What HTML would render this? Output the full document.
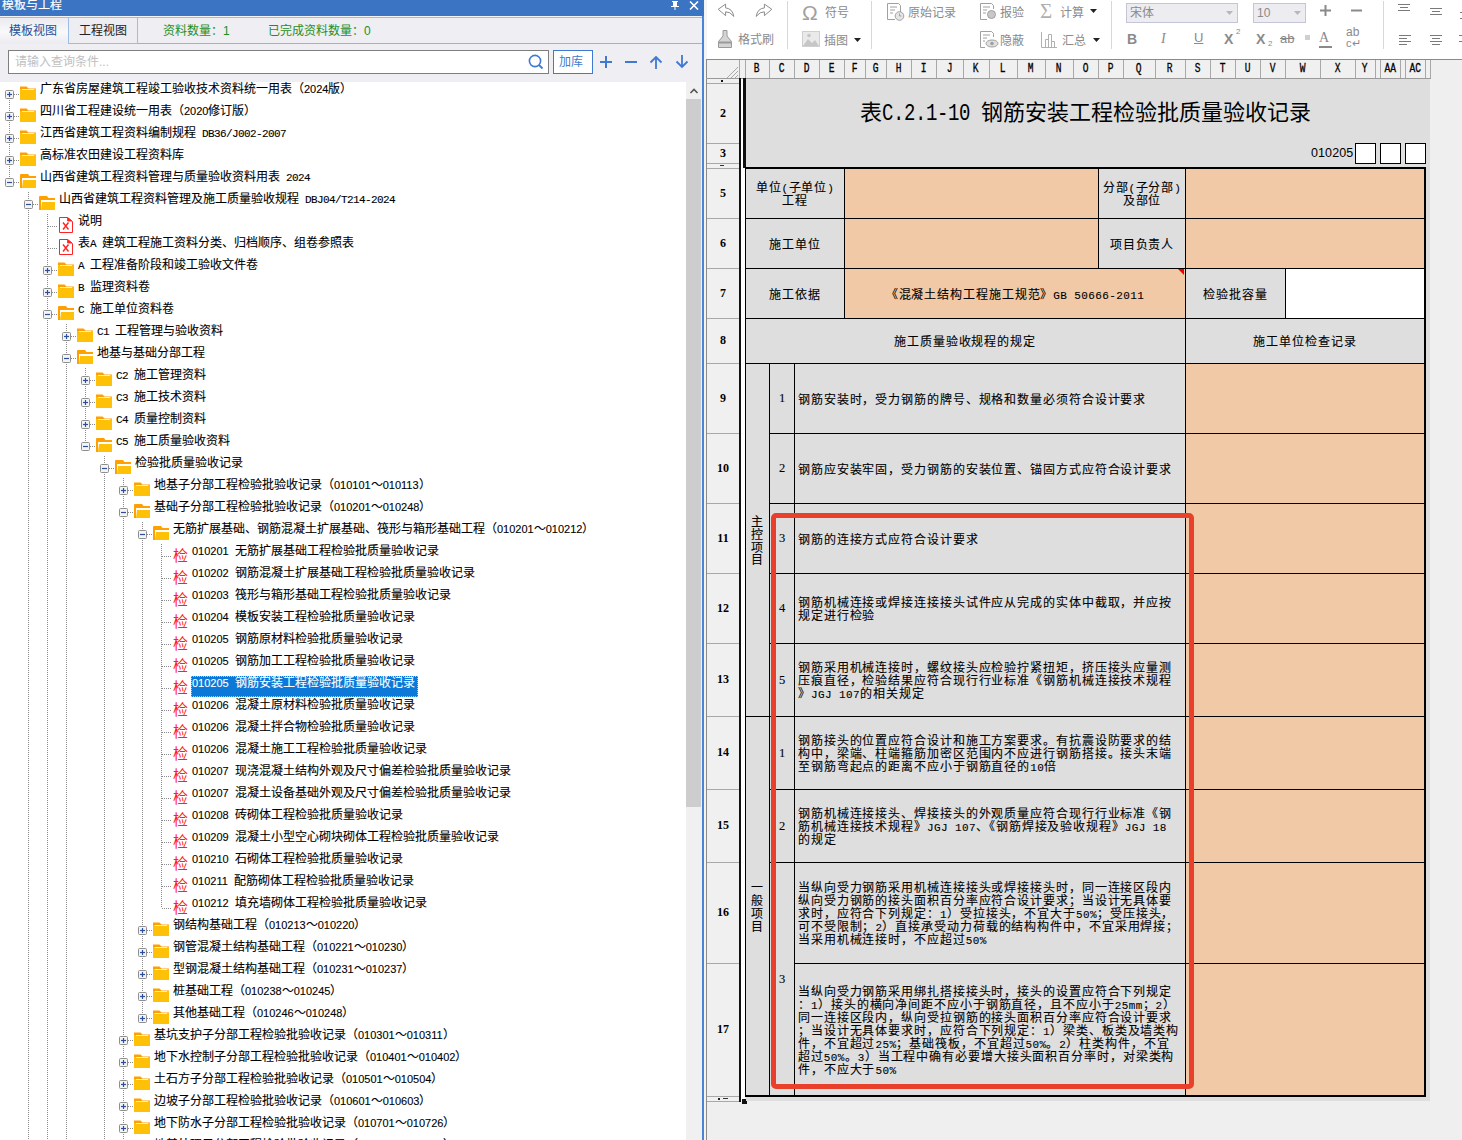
<!DOCTYPE html><html lang="zh-CN"><head><meta charset="utf-8"><style>
html,body{margin:0;padding:0}
body{width:1462px;height:1140px;overflow:hidden;position:relative;background:#fff;font-family:"Liberation Sans",sans-serif;font-size:12px;color:#000}
.tr,.sh{-webkit-text-stroke:0.1px}
div{position:absolute;box-sizing:border-box;white-space:pre}
span{white-space:pre}
svg{display:block}
.a{font-family:"Liberation Mono",monospace;font-size:11px;letter-spacing:-0.6px;line-height:1px}
.tr{font-size:12px;line-height:14px;height:14px}
.tr .a{font-family:"Liberation Sans",sans-serif;font-size:11px;letter-spacing:0;word-spacing:3px}
.tr.mo .a{font-family:"Liberation Mono",monospace;font-size:11px;letter-spacing:-0.6px;word-spacing:0}
.sh{font-size:12px;letter-spacing:0.9px;line-height:12.9px}
.sh .a{font-size:11px;letter-spacing:0.4px}
.rh{font-family:"Liberation Serif",serif;font-weight:bold;font-size:12px;width:32px;text-align:center;line-height:12px}
.ch{font-family:"Liberation Mono",monospace;font-size:12px;-webkit-text-stroke:0.3px;text-align:center;line-height:12px;top:63px}
.tb{color:#8a8a8a;font-size:12px;line-height:14px}
</style></head><body>

<div style="left:0px;top:0px;width:704px;height:16px;background:#3b74c3"></div>
<div style="left:2px;top:-2px;color:#fff;font-size:12px;line-height:14px;-webkit-text-stroke:0.15px">模板与工程</div>
<div style="left:671px;top:1px;width:8px;height:9px"><svg width="8" height="9"><rect x="1" y="0" width="6" height="1" fill="#fff"/><rect x="2" y="1" width="4" height="4" fill="#fff"/><rect x="0" y="5" width="8" height="1" fill="#fff"/><rect x="3.5" y="6" width="1" height="3" fill="#fff"/></svg></div>
<div style="left:689px;top:1px;width:10px;height:9px"><svg width="10" height="9"><path d="M1 0.5L9 8.5M9 0.5L1 8.5" stroke="#fff" stroke-width="1.6"/></svg></div>
<div style="left:0px;top:16px;width:702px;height:66px;background:#eeeef3"></div>
<div style="left:0px;top:16px;width:702px;height:1px;background:#f3f3f6"></div>
<div style="left:0px;top:17px;width:702px;height:1px;background:#9dbde8"></div>
<div style="left:68px;top:43px;width:634px;height:1px;background:#8fb3e3"></div>
<div style="left:0px;top:18px;width:68px;height:26px;background:linear-gradient(#ebebf0,#f9f9fb 55%,#ebebf0)"></div>
<div style="left:68px;top:17px;width:70px;height:27px;border:1px solid #9dbde8;background:#ededf2"></div>
<div style="left:9px;top:24px;color:#1f4f96;font-size:12px;line-height:14px">模板视图</div>
<div style="left:79px;top:24px;color:#222;font-size:12px;line-height:14px">工程视图</div>
<div style="left:163px;top:24px;color:#1f8f1f;font-size:12px;line-height:14px">资料数量：1</div>
<div style="left:268px;top:24px;color:#1f8f1f;font-size:12px;line-height:14px">已完成资料数量：0</div>
<div style="left:8px;top:50px;width:541px;height:24px;background:#fff;border:1px solid #7e7e7e"></div>
<div style="left:15px;top:55px;color:#c0c0c0;font-size:12px;line-height:14px">请输入查询条件...</div>
<div style="left:528px;top:54px;width:16px;height:16px"><svg width="16" height="16"><circle cx="7" cy="7" r="5.6" fill="none" stroke="#3d7bd0" stroke-width="1.6"/><path d="M11 11L14.5 14.5" stroke="#3d7bd0" stroke-width="1.8"/></svg></div>
<div style="left:553px;top:50px;width:40px;height:24px;border:1px solid #3f7ad0;background:#fff"></div>
<div style="left:559px;top:55px;color:#3f7ad0;font-size:12px;line-height:14px">加库</div>
<div style="left:598px;top:54px;width:92px;height:16px"><svg width="92" height="16"><path d="M2 8H14M8 2V14" stroke="#3f7ad0" stroke-width="2"/><path d="M27 8H39" stroke="#3f7ad0" stroke-width="2"/><path d="M58 3V15M52.5 8.5L58 3L63.5 8.5" stroke="#3f7ad0" stroke-width="1.8" fill="none"/><path d="M84 1V13M78.5 7.5L84 13L89.5 7.5" stroke="#3f7ad0" stroke-width="1.8" fill="none"/></svg></div>
<div style="left:0px;top:82px;width:686px;height:1058px;background:#fff"></div>
<div style="left:686px;top:82px;width:16px;height:1058px;background:#f0f0f0"></div>
<div style="left:686px;top:99px;width:15px;height:708px;background:#cdcdcd"></div>
<div style="left:689px;top:87px;width:10px;height:8px"><svg width="10" height="8"><path d="M1.5 6L5 2.5L8.5 6" stroke="#555" stroke-width="1.6" fill="none"/></svg></div>
<div style="left:702px;top:16px;width:2px;height:1124px;background:#4a84d6"></div>
<div style="left:704px;top:0px;width:3px;height:1140px;background:#f4f4f6"></div>
<div style="left:9px;top:94px;width:1px;height:88px;background-image:linear-gradient(#8a8a8a 50%,transparent 50%);background-size:1px 2px"></div>
<div style="left:28px;top:192px;width:1px;height:948px;background-image:linear-gradient(#8a8a8a 50%,transparent 50%);background-size:1px 2px"></div>
<div style="left:47px;top:214px;width:1px;height:926px;background-image:linear-gradient(#8a8a8a 50%,transparent 50%);background-size:1px 2px"></div>
<div style="left:66px;top:324px;width:1px;height:816px;background-image:linear-gradient(#8a8a8a 50%,transparent 50%);background-size:1px 2px"></div>
<div style="left:85px;top:368px;width:1px;height:78px;background-image:linear-gradient(#8a8a8a 50%,transparent 50%);background-size:1px 2px"></div>
<div style="left:104px;top:456px;width:1px;height:684px;background-image:linear-gradient(#8a8a8a 50%,transparent 50%);background-size:1px 2px"></div>
<div style="left:123px;top:478px;width:1px;height:662px;background-image:linear-gradient(#8a8a8a 50%,transparent 50%);background-size:1px 2px"></div>
<div style="left:142px;top:522px;width:1px;height:496px;background-image:linear-gradient(#8a8a8a 50%,transparent 50%);background-size:1px 2px"></div>
<div style="left:161px;top:544px;width:1px;height:364px;background-image:linear-gradient(#8a8a8a 50%,transparent 50%);background-size:1px 2px"></div>
<div style="left:14px;top:94px;width:6px;height:1px;background-image:linear-gradient(90deg,#8a8a8a 50%,transparent 50%);background-size:2px 1px"></div>
<div style="left:5px;top:90px;width:9px;height:9px"><svg width="9" height="9"><rect x="0.5" y="0.5" width="8" height="8" rx="1" fill="#f4f4f4" stroke="#8e8e8e"/><path d="M2 4.5H7" stroke="#2b4f9e" stroke-width="1.2"/><path d="M4.5 2V7" stroke="#2b4f9e" stroke-width="1.2"/></svg></div>
<div style="left:20px;top:86px;width:16px;height:14px"><svg width="16" height="14"><path d="M0 0.5H6.5L8.5 2.5H16V14H0Z" fill="#ffa000"/><rect x="0" y="3" width="16" height="11" fill="#ffc107"/><rect x="2" y="3" width="12" height="1" fill="#fff3c0"/></svg></div>
<div class="tr" style="left:40px;top:82px">广东省房屋建筑工程竣工验收技术资料统一用表（<span class="a">2024</span>版）</div>
<div style="left:14px;top:116px;width:6px;height:1px;background-image:linear-gradient(90deg,#8a8a8a 50%,transparent 50%);background-size:2px 1px"></div>
<div style="left:5px;top:112px;width:9px;height:9px"><svg width="9" height="9"><rect x="0.5" y="0.5" width="8" height="8" rx="1" fill="#f4f4f4" stroke="#8e8e8e"/><path d="M2 4.5H7" stroke="#2b4f9e" stroke-width="1.2"/><path d="M4.5 2V7" stroke="#2b4f9e" stroke-width="1.2"/></svg></div>
<div style="left:20px;top:108px;width:16px;height:14px"><svg width="16" height="14"><path d="M0 0.5H6.5L8.5 2.5H16V14H0Z" fill="#ffa000"/><rect x="0" y="3" width="16" height="11" fill="#ffc107"/><rect x="2" y="3" width="12" height="1" fill="#fff3c0"/></svg></div>
<div class="tr" style="left:40px;top:104px">四川省工程建设统一用表（<span class="a">2020</span>修订版）</div>
<div style="left:14px;top:138px;width:6px;height:1px;background-image:linear-gradient(90deg,#8a8a8a 50%,transparent 50%);background-size:2px 1px"></div>
<div style="left:5px;top:134px;width:9px;height:9px"><svg width="9" height="9"><rect x="0.5" y="0.5" width="8" height="8" rx="1" fill="#f4f4f4" stroke="#8e8e8e"/><path d="M2 4.5H7" stroke="#2b4f9e" stroke-width="1.2"/><path d="M4.5 2V7" stroke="#2b4f9e" stroke-width="1.2"/></svg></div>
<div style="left:20px;top:130px;width:16px;height:14px"><svg width="16" height="14"><path d="M0 0.5H6.5L8.5 2.5H16V14H0Z" fill="#ffa000"/><rect x="0" y="3" width="16" height="11" fill="#ffc107"/><rect x="2" y="3" width="12" height="1" fill="#fff3c0"/></svg></div>
<div class="tr mo" style="left:40px;top:126px">江西省建筑工程资料编制规程<span class="a"> DB36/J002-2007</span></div>
<div style="left:14px;top:160px;width:6px;height:1px;background-image:linear-gradient(90deg,#8a8a8a 50%,transparent 50%);background-size:2px 1px"></div>
<div style="left:5px;top:156px;width:9px;height:9px"><svg width="9" height="9"><rect x="0.5" y="0.5" width="8" height="8" rx="1" fill="#f4f4f4" stroke="#8e8e8e"/><path d="M2 4.5H7" stroke="#2b4f9e" stroke-width="1.2"/><path d="M4.5 2V7" stroke="#2b4f9e" stroke-width="1.2"/></svg></div>
<div style="left:20px;top:152px;width:16px;height:14px"><svg width="16" height="14"><path d="M0 0.5H6.5L8.5 2.5H16V14H0Z" fill="#ffa000"/><rect x="0" y="3" width="16" height="11" fill="#ffc107"/><rect x="2" y="3" width="12" height="1" fill="#fff3c0"/></svg></div>
<div class="tr" style="left:40px;top:148px">高标准农田建设工程资料库</div>
<div style="left:14px;top:182px;width:6px;height:1px;background-image:linear-gradient(90deg,#8a8a8a 50%,transparent 50%);background-size:2px 1px"></div>
<div style="left:5px;top:178px;width:9px;height:9px"><svg width="9" height="9"><rect x="0.5" y="0.5" width="8" height="8" rx="1" fill="#f4f4f4" stroke="#8e8e8e"/><path d="M2 4.5H7" stroke="#2b4f9e" stroke-width="1.2"/></svg></div>
<div style="left:20px;top:174px;width:16px;height:14px"><svg width="16" height="14"><path d="M0 1Q0 0 1 0H8L9.5 2H16V4H2V14H0Z" fill="#ffa000"/><path d="M3 6H16V14H2Z" fill="#ffc107"/></svg></div>
<div class="tr mo" style="left:40px;top:170px">山西省建筑工程资料管理与质量验收资料用表<span class="a"> 2024</span></div>
<div style="left:33px;top:204px;width:6px;height:1px;background-image:linear-gradient(90deg,#8a8a8a 50%,transparent 50%);background-size:2px 1px"></div>
<div style="left:24px;top:200px;width:9px;height:9px"><svg width="9" height="9"><rect x="0.5" y="0.5" width="8" height="8" rx="1" fill="#f4f4f4" stroke="#8e8e8e"/><path d="M2 4.5H7" stroke="#2b4f9e" stroke-width="1.2"/></svg></div>
<div style="left:39px;top:196px;width:16px;height:14px"><svg width="16" height="14"><path d="M0 1Q0 0 1 0H8L9.5 2H16V4H2V14H0Z" fill="#ffa000"/><path d="M3 6H16V14H2Z" fill="#ffc107"/></svg></div>
<div class="tr mo" style="left:59px;top:192px">山西省建筑工程资料管理及施工质量验收规程<span class="a"> DBJ04/T214-2024</span></div>
<div style="left:48px;top:226px;width:10px;height:1px;background-image:linear-gradient(90deg,#8a8a8a 50%,transparent 50%);background-size:2px 1px"></div>
<div style="left:59px;top:217px;width:14px;height:16px"><svg width="14" height="16"><path d="M0.5 0.5H8.5L13.5 4.5V15.5H0.5Z" fill="#fff" stroke="#ff2424"/><path d="M8.5 0.5V4H13Z" fill="#ff2424" stroke="#ff2424" stroke-width="0.8"/><path d="M4 5.5L9.5 12.5M9.5 5.5L4 12.5" stroke="#ff2424" stroke-width="1.4"/></svg></div>
<div class="tr" style="left:78px;top:214px">说明</div>
<div style="left:48px;top:248px;width:10px;height:1px;background-image:linear-gradient(90deg,#8a8a8a 50%,transparent 50%);background-size:2px 1px"></div>
<div style="left:59px;top:239px;width:14px;height:16px"><svg width="14" height="16"><path d="M0.5 0.5H8.5L13.5 4.5V15.5H0.5Z" fill="#fff" stroke="#ff2424"/><path d="M8.5 0.5V4H13Z" fill="#ff2424" stroke="#ff2424" stroke-width="0.8"/><path d="M4 5.5L9.5 12.5M9.5 5.5L4 12.5" stroke="#ff2424" stroke-width="1.4"/></svg></div>
<div class="tr mo" style="left:78px;top:236px">表<span class="a">A </span>建筑工程施工资料分类、归档顺序、组卷参照表</div>
<div style="left:52px;top:270px;width:6px;height:1px;background-image:linear-gradient(90deg,#8a8a8a 50%,transparent 50%);background-size:2px 1px"></div>
<div style="left:43px;top:266px;width:9px;height:9px"><svg width="9" height="9"><rect x="0.5" y="0.5" width="8" height="8" rx="1" fill="#f4f4f4" stroke="#8e8e8e"/><path d="M2 4.5H7" stroke="#2b4f9e" stroke-width="1.2"/><path d="M4.5 2V7" stroke="#2b4f9e" stroke-width="1.2"/></svg></div>
<div style="left:58px;top:262px;width:16px;height:14px"><svg width="16" height="14"><path d="M0 0.5H6.5L8.5 2.5H16V14H0Z" fill="#ffa000"/><rect x="0" y="3" width="16" height="11" fill="#ffc107"/><rect x="2" y="3" width="12" height="1" fill="#fff3c0"/></svg></div>
<div class="tr mo" style="left:78px;top:258px"><span class="a">A </span>工程准备阶段和竣工验收文件卷</div>
<div style="left:52px;top:292px;width:6px;height:1px;background-image:linear-gradient(90deg,#8a8a8a 50%,transparent 50%);background-size:2px 1px"></div>
<div style="left:43px;top:288px;width:9px;height:9px"><svg width="9" height="9"><rect x="0.5" y="0.5" width="8" height="8" rx="1" fill="#f4f4f4" stroke="#8e8e8e"/><path d="M2 4.5H7" stroke="#2b4f9e" stroke-width="1.2"/><path d="M4.5 2V7" stroke="#2b4f9e" stroke-width="1.2"/></svg></div>
<div style="left:58px;top:284px;width:16px;height:14px"><svg width="16" height="14"><path d="M0 0.5H6.5L8.5 2.5H16V14H0Z" fill="#ffa000"/><rect x="0" y="3" width="16" height="11" fill="#ffc107"/><rect x="2" y="3" width="12" height="1" fill="#fff3c0"/></svg></div>
<div class="tr mo" style="left:78px;top:280px"><span class="a">B </span>监理资料卷</div>
<div style="left:52px;top:314px;width:6px;height:1px;background-image:linear-gradient(90deg,#8a8a8a 50%,transparent 50%);background-size:2px 1px"></div>
<div style="left:43px;top:310px;width:9px;height:9px"><svg width="9" height="9"><rect x="0.5" y="0.5" width="8" height="8" rx="1" fill="#f4f4f4" stroke="#8e8e8e"/><path d="M2 4.5H7" stroke="#2b4f9e" stroke-width="1.2"/></svg></div>
<div style="left:58px;top:306px;width:16px;height:14px"><svg width="16" height="14"><path d="M0 1Q0 0 1 0H8L9.5 2H16V4H2V14H0Z" fill="#ffa000"/><path d="M3 6H16V14H2Z" fill="#ffc107"/></svg></div>
<div class="tr mo" style="left:78px;top:302px"><span class="a">C </span>施工单位资料卷</div>
<div style="left:71px;top:336px;width:6px;height:1px;background-image:linear-gradient(90deg,#8a8a8a 50%,transparent 50%);background-size:2px 1px"></div>
<div style="left:62px;top:332px;width:9px;height:9px"><svg width="9" height="9"><rect x="0.5" y="0.5" width="8" height="8" rx="1" fill="#f4f4f4" stroke="#8e8e8e"/><path d="M2 4.5H7" stroke="#2b4f9e" stroke-width="1.2"/><path d="M4.5 2V7" stroke="#2b4f9e" stroke-width="1.2"/></svg></div>
<div style="left:77px;top:328px;width:16px;height:14px"><svg width="16" height="14"><path d="M0 0.5H6.5L8.5 2.5H16V14H0Z" fill="#ffa000"/><rect x="0" y="3" width="16" height="11" fill="#ffc107"/><rect x="2" y="3" width="12" height="1" fill="#fff3c0"/></svg></div>
<div class="tr mo" style="left:97px;top:324px"><span class="a">C1 </span>工程管理与验收资料</div>
<div style="left:71px;top:358px;width:6px;height:1px;background-image:linear-gradient(90deg,#8a8a8a 50%,transparent 50%);background-size:2px 1px"></div>
<div style="left:62px;top:354px;width:9px;height:9px"><svg width="9" height="9"><rect x="0.5" y="0.5" width="8" height="8" rx="1" fill="#f4f4f4" stroke="#8e8e8e"/><path d="M2 4.5H7" stroke="#2b4f9e" stroke-width="1.2"/></svg></div>
<div style="left:77px;top:350px;width:16px;height:14px"><svg width="16" height="14"><path d="M0 1Q0 0 1 0H8L9.5 2H16V4H2V14H0Z" fill="#ffa000"/><path d="M3 6H16V14H2Z" fill="#ffc107"/></svg></div>
<div class="tr" style="left:97px;top:346px">地基与基础分部工程</div>
<div style="left:90px;top:380px;width:6px;height:1px;background-image:linear-gradient(90deg,#8a8a8a 50%,transparent 50%);background-size:2px 1px"></div>
<div style="left:81px;top:376px;width:9px;height:9px"><svg width="9" height="9"><rect x="0.5" y="0.5" width="8" height="8" rx="1" fill="#f4f4f4" stroke="#8e8e8e"/><path d="M2 4.5H7" stroke="#2b4f9e" stroke-width="1.2"/><path d="M4.5 2V7" stroke="#2b4f9e" stroke-width="1.2"/></svg></div>
<div style="left:96px;top:372px;width:16px;height:14px"><svg width="16" height="14"><path d="M0 0.5H6.5L8.5 2.5H16V14H0Z" fill="#ffa000"/><rect x="0" y="3" width="16" height="11" fill="#ffc107"/><rect x="2" y="3" width="12" height="1" fill="#fff3c0"/></svg></div>
<div class="tr mo" style="left:116px;top:368px"><span class="a">C2 </span>施工管理资料</div>
<div style="left:90px;top:402px;width:6px;height:1px;background-image:linear-gradient(90deg,#8a8a8a 50%,transparent 50%);background-size:2px 1px"></div>
<div style="left:81px;top:398px;width:9px;height:9px"><svg width="9" height="9"><rect x="0.5" y="0.5" width="8" height="8" rx="1" fill="#f4f4f4" stroke="#8e8e8e"/><path d="M2 4.5H7" stroke="#2b4f9e" stroke-width="1.2"/><path d="M4.5 2V7" stroke="#2b4f9e" stroke-width="1.2"/></svg></div>
<div style="left:96px;top:394px;width:16px;height:14px"><svg width="16" height="14"><path d="M0 0.5H6.5L8.5 2.5H16V14H0Z" fill="#ffa000"/><rect x="0" y="3" width="16" height="11" fill="#ffc107"/><rect x="2" y="3" width="12" height="1" fill="#fff3c0"/></svg></div>
<div class="tr mo" style="left:116px;top:390px"><span class="a">C3 </span>施工技术资料</div>
<div style="left:90px;top:424px;width:6px;height:1px;background-image:linear-gradient(90deg,#8a8a8a 50%,transparent 50%);background-size:2px 1px"></div>
<div style="left:81px;top:420px;width:9px;height:9px"><svg width="9" height="9"><rect x="0.5" y="0.5" width="8" height="8" rx="1" fill="#f4f4f4" stroke="#8e8e8e"/><path d="M2 4.5H7" stroke="#2b4f9e" stroke-width="1.2"/><path d="M4.5 2V7" stroke="#2b4f9e" stroke-width="1.2"/></svg></div>
<div style="left:96px;top:416px;width:16px;height:14px"><svg width="16" height="14"><path d="M0 0.5H6.5L8.5 2.5H16V14H0Z" fill="#ffa000"/><rect x="0" y="3" width="16" height="11" fill="#ffc107"/><rect x="2" y="3" width="12" height="1" fill="#fff3c0"/></svg></div>
<div class="tr mo" style="left:116px;top:412px"><span class="a">C4 </span>质量控制资料</div>
<div style="left:90px;top:446px;width:6px;height:1px;background-image:linear-gradient(90deg,#8a8a8a 50%,transparent 50%);background-size:2px 1px"></div>
<div style="left:81px;top:442px;width:9px;height:9px"><svg width="9" height="9"><rect x="0.5" y="0.5" width="8" height="8" rx="1" fill="#f4f4f4" stroke="#8e8e8e"/><path d="M2 4.5H7" stroke="#2b4f9e" stroke-width="1.2"/></svg></div>
<div style="left:96px;top:438px;width:16px;height:14px"><svg width="16" height="14"><path d="M0 1Q0 0 1 0H8L9.5 2H16V4H2V14H0Z" fill="#ffa000"/><path d="M3 6H16V14H2Z" fill="#ffc107"/></svg></div>
<div class="tr mo" style="left:116px;top:434px"><span class="a">C5 </span>施工质量验收资料</div>
<div style="left:109px;top:468px;width:6px;height:1px;background-image:linear-gradient(90deg,#8a8a8a 50%,transparent 50%);background-size:2px 1px"></div>
<div style="left:100px;top:464px;width:9px;height:9px"><svg width="9" height="9"><rect x="0.5" y="0.5" width="8" height="8" rx="1" fill="#f4f4f4" stroke="#8e8e8e"/><path d="M2 4.5H7" stroke="#2b4f9e" stroke-width="1.2"/></svg></div>
<div style="left:115px;top:460px;width:16px;height:14px"><svg width="16" height="14"><path d="M0 1Q0 0 1 0H8L9.5 2H16V4H2V14H0Z" fill="#ffa000"/><path d="M3 6H16V14H2Z" fill="#ffc107"/></svg></div>
<div class="tr" style="left:135px;top:456px">检验批质量验收记录</div>
<div style="left:128px;top:490px;width:6px;height:1px;background-image:linear-gradient(90deg,#8a8a8a 50%,transparent 50%);background-size:2px 1px"></div>
<div style="left:119px;top:486px;width:9px;height:9px"><svg width="9" height="9"><rect x="0.5" y="0.5" width="8" height="8" rx="1" fill="#f4f4f4" stroke="#8e8e8e"/><path d="M2 4.5H7" stroke="#2b4f9e" stroke-width="1.2"/><path d="M4.5 2V7" stroke="#2b4f9e" stroke-width="1.2"/></svg></div>
<div style="left:134px;top:482px;width:16px;height:14px"><svg width="16" height="14"><path d="M0 0.5H6.5L8.5 2.5H16V14H0Z" fill="#ffa000"/><rect x="0" y="3" width="16" height="11" fill="#ffc107"/><rect x="2" y="3" width="12" height="1" fill="#fff3c0"/></svg></div>
<div class="tr" style="left:154px;top:478px">地基子分部工程检验批验收记录（<span class="a">010101</span>～<span class="a">010113</span>）</div>
<div style="left:128px;top:512px;width:6px;height:1px;background-image:linear-gradient(90deg,#8a8a8a 50%,transparent 50%);background-size:2px 1px"></div>
<div style="left:119px;top:508px;width:9px;height:9px"><svg width="9" height="9"><rect x="0.5" y="0.5" width="8" height="8" rx="1" fill="#f4f4f4" stroke="#8e8e8e"/><path d="M2 4.5H7" stroke="#2b4f9e" stroke-width="1.2"/></svg></div>
<div style="left:134px;top:504px;width:16px;height:14px"><svg width="16" height="14"><path d="M0 1Q0 0 1 0H8L9.5 2H16V4H2V14H0Z" fill="#ffa000"/><path d="M3 6H16V14H2Z" fill="#ffc107"/></svg></div>
<div class="tr" style="left:154px;top:500px">基础子分部工程检验批验收记录（<span class="a">010201</span>～<span class="a">010248</span>）</div>
<div style="left:147px;top:534px;width:6px;height:1px;background-image:linear-gradient(90deg,#8a8a8a 50%,transparent 50%);background-size:2px 1px"></div>
<div style="left:138px;top:530px;width:9px;height:9px"><svg width="9" height="9"><rect x="0.5" y="0.5" width="8" height="8" rx="1" fill="#f4f4f4" stroke="#8e8e8e"/><path d="M2 4.5H7" stroke="#2b4f9e" stroke-width="1.2"/></svg></div>
<div style="left:153px;top:526px;width:16px;height:14px"><svg width="16" height="14"><path d="M0 1Q0 0 1 0H8L9.5 2H16V4H2V14H0Z" fill="#ffa000"/><path d="M3 6H16V14H2Z" fill="#ffc107"/></svg></div>
<div class="tr" style="left:173px;top:522px">无筋扩展基础、钢筋混凝土扩展基础、筏形与箱形基础工程（<span class="a">010201</span>～<span class="a">010212</span>）</div>
<div style="left:162px;top:556px;width:10px;height:1px;background-image:linear-gradient(90deg,#8a8a8a 50%,transparent 50%);background-size:2px 1px"></div>
<div style="left:173px;top:548px;color:#ff2020;font-size:15px;line-height:16px">检</div>
<div class="tr" style="left:192px;top:544px"><span class="a">010201 </span>无筋扩展基础工程检验批质量验收记录</div>
<div style="left:162px;top:578px;width:10px;height:1px;background-image:linear-gradient(90deg,#8a8a8a 50%,transparent 50%);background-size:2px 1px"></div>
<div style="left:173px;top:570px;color:#ff2020;font-size:15px;line-height:16px">检</div>
<div class="tr" style="left:192px;top:566px"><span class="a">010202 </span>钢筋混凝土扩展基础工程检验批质量验收记录</div>
<div style="left:162px;top:600px;width:10px;height:1px;background-image:linear-gradient(90deg,#8a8a8a 50%,transparent 50%);background-size:2px 1px"></div>
<div style="left:173px;top:592px;color:#ff2020;font-size:15px;line-height:16px">检</div>
<div class="tr" style="left:192px;top:588px"><span class="a">010203 </span>筏形与箱形基础工程检验批质量验收记录</div>
<div style="left:162px;top:622px;width:10px;height:1px;background-image:linear-gradient(90deg,#8a8a8a 50%,transparent 50%);background-size:2px 1px"></div>
<div style="left:173px;top:614px;color:#ff2020;font-size:15px;line-height:16px">检</div>
<div class="tr" style="left:192px;top:610px"><span class="a">010204 </span>模板安装工程检验批质量验收记录</div>
<div style="left:162px;top:644px;width:10px;height:1px;background-image:linear-gradient(90deg,#8a8a8a 50%,transparent 50%);background-size:2px 1px"></div>
<div style="left:173px;top:636px;color:#ff2020;font-size:15px;line-height:16px">检</div>
<div class="tr" style="left:192px;top:632px"><span class="a">010205 </span>钢筋原材料检验批质量验收记录</div>
<div style="left:162px;top:666px;width:10px;height:1px;background-image:linear-gradient(90deg,#8a8a8a 50%,transparent 50%);background-size:2px 1px"></div>
<div style="left:173px;top:658px;color:#ff2020;font-size:15px;line-height:16px">检</div>
<div class="tr" style="left:192px;top:654px"><span class="a">010205 </span>钢筋加工工程检验批质量验收记录</div>
<div style="left:162px;top:688px;width:10px;height:1px;background-image:linear-gradient(90deg,#8a8a8a 50%,transparent 50%);background-size:2px 1px"></div>
<div style="left:173px;top:680px;color:#ff2020;font-size:15px;line-height:16px">检</div>
<div style="left:191px;top:676px;width:227px;height:21px;background:#0c79d8;border:1px dotted #f0c060"></div>
<div class="tr" style="left:192px;top:676px;color:#fff"><span class="a">010205 </span>钢筋安装工程检验批质量验收记录</div>
<div style="left:162px;top:710px;width:10px;height:1px;background-image:linear-gradient(90deg,#8a8a8a 50%,transparent 50%);background-size:2px 1px"></div>
<div style="left:173px;top:702px;color:#ff2020;font-size:15px;line-height:16px">检</div>
<div class="tr" style="left:192px;top:698px"><span class="a">010206 </span>混凝土原材料检验批质量验收记录</div>
<div style="left:162px;top:732px;width:10px;height:1px;background-image:linear-gradient(90deg,#8a8a8a 50%,transparent 50%);background-size:2px 1px"></div>
<div style="left:173px;top:724px;color:#ff2020;font-size:15px;line-height:16px">检</div>
<div class="tr" style="left:192px;top:720px"><span class="a">010206 </span>混凝土拌合物检验批质量验收记录</div>
<div style="left:162px;top:754px;width:10px;height:1px;background-image:linear-gradient(90deg,#8a8a8a 50%,transparent 50%);background-size:2px 1px"></div>
<div style="left:173px;top:746px;color:#ff2020;font-size:15px;line-height:16px">检</div>
<div class="tr" style="left:192px;top:742px"><span class="a">010206 </span>混凝土施工工程检验批质量验收记录</div>
<div style="left:162px;top:776px;width:10px;height:1px;background-image:linear-gradient(90deg,#8a8a8a 50%,transparent 50%);background-size:2px 1px"></div>
<div style="left:173px;top:768px;color:#ff2020;font-size:15px;line-height:16px">检</div>
<div class="tr" style="left:192px;top:764px"><span class="a">010207 </span>现浇混凝土结构外观及尺寸偏差检验批质量验收记录</div>
<div style="left:162px;top:798px;width:10px;height:1px;background-image:linear-gradient(90deg,#8a8a8a 50%,transparent 50%);background-size:2px 1px"></div>
<div style="left:173px;top:790px;color:#ff2020;font-size:15px;line-height:16px">检</div>
<div class="tr" style="left:192px;top:786px"><span class="a">010207 </span>混凝土设备基础外观及尺寸偏差检验批质量验收记录</div>
<div style="left:162px;top:820px;width:10px;height:1px;background-image:linear-gradient(90deg,#8a8a8a 50%,transparent 50%);background-size:2px 1px"></div>
<div style="left:173px;top:812px;color:#ff2020;font-size:15px;line-height:16px">检</div>
<div class="tr" style="left:192px;top:808px"><span class="a">010208 </span>砖砌体工程检验批质量验收记录</div>
<div style="left:162px;top:842px;width:10px;height:1px;background-image:linear-gradient(90deg,#8a8a8a 50%,transparent 50%);background-size:2px 1px"></div>
<div style="left:173px;top:834px;color:#ff2020;font-size:15px;line-height:16px">检</div>
<div class="tr" style="left:192px;top:830px"><span class="a">010209 </span>混凝土小型空心砌块砌体工程检验批质量验收记录</div>
<div style="left:162px;top:864px;width:10px;height:1px;background-image:linear-gradient(90deg,#8a8a8a 50%,transparent 50%);background-size:2px 1px"></div>
<div style="left:173px;top:856px;color:#ff2020;font-size:15px;line-height:16px">检</div>
<div class="tr" style="left:192px;top:852px"><span class="a">010210 </span>石砌体工程检验批质量验收记录</div>
<div style="left:162px;top:886px;width:10px;height:1px;background-image:linear-gradient(90deg,#8a8a8a 50%,transparent 50%);background-size:2px 1px"></div>
<div style="left:173px;top:878px;color:#ff2020;font-size:15px;line-height:16px">检</div>
<div class="tr" style="left:192px;top:874px"><span class="a">010211 </span>配筋砌体工程检验批质量验收记录</div>
<div style="left:162px;top:908px;width:10px;height:1px;background-image:linear-gradient(90deg,#8a8a8a 50%,transparent 50%);background-size:2px 1px"></div>
<div style="left:173px;top:900px;color:#ff2020;font-size:15px;line-height:16px">检</div>
<div class="tr" style="left:192px;top:896px"><span class="a">010212 </span>填充墙砌体工程检验批质量验收记录</div>
<div style="left:147px;top:930px;width:6px;height:1px;background-image:linear-gradient(90deg,#8a8a8a 50%,transparent 50%);background-size:2px 1px"></div>
<div style="left:138px;top:926px;width:9px;height:9px"><svg width="9" height="9"><rect x="0.5" y="0.5" width="8" height="8" rx="1" fill="#f4f4f4" stroke="#8e8e8e"/><path d="M2 4.5H7" stroke="#2b4f9e" stroke-width="1.2"/><path d="M4.5 2V7" stroke="#2b4f9e" stroke-width="1.2"/></svg></div>
<div style="left:153px;top:922px;width:16px;height:14px"><svg width="16" height="14"><path d="M0 0.5H6.5L8.5 2.5H16V14H0Z" fill="#ffa000"/><rect x="0" y="3" width="16" height="11" fill="#ffc107"/><rect x="2" y="3" width="12" height="1" fill="#fff3c0"/></svg></div>
<div class="tr" style="left:173px;top:918px">钢结构基础工程（<span class="a">010213</span>～<span class="a">010220</span>）</div>
<div style="left:147px;top:952px;width:6px;height:1px;background-image:linear-gradient(90deg,#8a8a8a 50%,transparent 50%);background-size:2px 1px"></div>
<div style="left:138px;top:948px;width:9px;height:9px"><svg width="9" height="9"><rect x="0.5" y="0.5" width="8" height="8" rx="1" fill="#f4f4f4" stroke="#8e8e8e"/><path d="M2 4.5H7" stroke="#2b4f9e" stroke-width="1.2"/><path d="M4.5 2V7" stroke="#2b4f9e" stroke-width="1.2"/></svg></div>
<div style="left:153px;top:944px;width:16px;height:14px"><svg width="16" height="14"><path d="M0 0.5H6.5L8.5 2.5H16V14H0Z" fill="#ffa000"/><rect x="0" y="3" width="16" height="11" fill="#ffc107"/><rect x="2" y="3" width="12" height="1" fill="#fff3c0"/></svg></div>
<div class="tr" style="left:173px;top:940px">钢管混凝土结构基础工程（<span class="a">010221</span>～<span class="a">010230</span>）</div>
<div style="left:147px;top:974px;width:6px;height:1px;background-image:linear-gradient(90deg,#8a8a8a 50%,transparent 50%);background-size:2px 1px"></div>
<div style="left:138px;top:970px;width:9px;height:9px"><svg width="9" height="9"><rect x="0.5" y="0.5" width="8" height="8" rx="1" fill="#f4f4f4" stroke="#8e8e8e"/><path d="M2 4.5H7" stroke="#2b4f9e" stroke-width="1.2"/><path d="M4.5 2V7" stroke="#2b4f9e" stroke-width="1.2"/></svg></div>
<div style="left:153px;top:966px;width:16px;height:14px"><svg width="16" height="14"><path d="M0 0.5H6.5L8.5 2.5H16V14H0Z" fill="#ffa000"/><rect x="0" y="3" width="16" height="11" fill="#ffc107"/><rect x="2" y="3" width="12" height="1" fill="#fff3c0"/></svg></div>
<div class="tr" style="left:173px;top:962px">型钢混凝土结构基础工程（<span class="a">010231</span>～<span class="a">010237</span>）</div>
<div style="left:147px;top:996px;width:6px;height:1px;background-image:linear-gradient(90deg,#8a8a8a 50%,transparent 50%);background-size:2px 1px"></div>
<div style="left:138px;top:992px;width:9px;height:9px"><svg width="9" height="9"><rect x="0.5" y="0.5" width="8" height="8" rx="1" fill="#f4f4f4" stroke="#8e8e8e"/><path d="M2 4.5H7" stroke="#2b4f9e" stroke-width="1.2"/><path d="M4.5 2V7" stroke="#2b4f9e" stroke-width="1.2"/></svg></div>
<div style="left:153px;top:988px;width:16px;height:14px"><svg width="16" height="14"><path d="M0 0.5H6.5L8.5 2.5H16V14H0Z" fill="#ffa000"/><rect x="0" y="3" width="16" height="11" fill="#ffc107"/><rect x="2" y="3" width="12" height="1" fill="#fff3c0"/></svg></div>
<div class="tr" style="left:173px;top:984px">桩基础工程（<span class="a">010238</span>～<span class="a">010245</span>）</div>
<div style="left:147px;top:1018px;width:6px;height:1px;background-image:linear-gradient(90deg,#8a8a8a 50%,transparent 50%);background-size:2px 1px"></div>
<div style="left:138px;top:1014px;width:9px;height:9px"><svg width="9" height="9"><rect x="0.5" y="0.5" width="8" height="8" rx="1" fill="#f4f4f4" stroke="#8e8e8e"/><path d="M2 4.5H7" stroke="#2b4f9e" stroke-width="1.2"/><path d="M4.5 2V7" stroke="#2b4f9e" stroke-width="1.2"/></svg></div>
<div style="left:153px;top:1010px;width:16px;height:14px"><svg width="16" height="14"><path d="M0 0.5H6.5L8.5 2.5H16V14H0Z" fill="#ffa000"/><rect x="0" y="3" width="16" height="11" fill="#ffc107"/><rect x="2" y="3" width="12" height="1" fill="#fff3c0"/></svg></div>
<div class="tr" style="left:173px;top:1006px">其他基础工程（<span class="a">010246</span>～<span class="a">010248</span>）</div>
<div style="left:128px;top:1040px;width:6px;height:1px;background-image:linear-gradient(90deg,#8a8a8a 50%,transparent 50%);background-size:2px 1px"></div>
<div style="left:119px;top:1036px;width:9px;height:9px"><svg width="9" height="9"><rect x="0.5" y="0.5" width="8" height="8" rx="1" fill="#f4f4f4" stroke="#8e8e8e"/><path d="M2 4.5H7" stroke="#2b4f9e" stroke-width="1.2"/><path d="M4.5 2V7" stroke="#2b4f9e" stroke-width="1.2"/></svg></div>
<div style="left:134px;top:1032px;width:16px;height:14px"><svg width="16" height="14"><path d="M0 0.5H6.5L8.5 2.5H16V14H0Z" fill="#ffa000"/><rect x="0" y="3" width="16" height="11" fill="#ffc107"/><rect x="2" y="3" width="12" height="1" fill="#fff3c0"/></svg></div>
<div class="tr" style="left:154px;top:1028px">基坑支护子分部工程检验批验收记录（<span class="a">010301</span>～<span class="a">010311</span>）</div>
<div style="left:128px;top:1062px;width:6px;height:1px;background-image:linear-gradient(90deg,#8a8a8a 50%,transparent 50%);background-size:2px 1px"></div>
<div style="left:119px;top:1058px;width:9px;height:9px"><svg width="9" height="9"><rect x="0.5" y="0.5" width="8" height="8" rx="1" fill="#f4f4f4" stroke="#8e8e8e"/><path d="M2 4.5H7" stroke="#2b4f9e" stroke-width="1.2"/><path d="M4.5 2V7" stroke="#2b4f9e" stroke-width="1.2"/></svg></div>
<div style="left:134px;top:1054px;width:16px;height:14px"><svg width="16" height="14"><path d="M0 0.5H6.5L8.5 2.5H16V14H0Z" fill="#ffa000"/><rect x="0" y="3" width="16" height="11" fill="#ffc107"/><rect x="2" y="3" width="12" height="1" fill="#fff3c0"/></svg></div>
<div class="tr" style="left:154px;top:1050px">地下水控制子分部工程检验批验收记录（<span class="a">010401</span>～<span class="a">010402</span>）</div>
<div style="left:128px;top:1084px;width:6px;height:1px;background-image:linear-gradient(90deg,#8a8a8a 50%,transparent 50%);background-size:2px 1px"></div>
<div style="left:119px;top:1080px;width:9px;height:9px"><svg width="9" height="9"><rect x="0.5" y="0.5" width="8" height="8" rx="1" fill="#f4f4f4" stroke="#8e8e8e"/><path d="M2 4.5H7" stroke="#2b4f9e" stroke-width="1.2"/><path d="M4.5 2V7" stroke="#2b4f9e" stroke-width="1.2"/></svg></div>
<div style="left:134px;top:1076px;width:16px;height:14px"><svg width="16" height="14"><path d="M0 0.5H6.5L8.5 2.5H16V14H0Z" fill="#ffa000"/><rect x="0" y="3" width="16" height="11" fill="#ffc107"/><rect x="2" y="3" width="12" height="1" fill="#fff3c0"/></svg></div>
<div class="tr" style="left:154px;top:1072px">土石方子分部工程检验批验收记录（<span class="a">010501</span>～<span class="a">010504</span>）</div>
<div style="left:128px;top:1106px;width:6px;height:1px;background-image:linear-gradient(90deg,#8a8a8a 50%,transparent 50%);background-size:2px 1px"></div>
<div style="left:119px;top:1102px;width:9px;height:9px"><svg width="9" height="9"><rect x="0.5" y="0.5" width="8" height="8" rx="1" fill="#f4f4f4" stroke="#8e8e8e"/><path d="M2 4.5H7" stroke="#2b4f9e" stroke-width="1.2"/><path d="M4.5 2V7" stroke="#2b4f9e" stroke-width="1.2"/></svg></div>
<div style="left:134px;top:1098px;width:16px;height:14px"><svg width="16" height="14"><path d="M0 0.5H6.5L8.5 2.5H16V14H0Z" fill="#ffa000"/><rect x="0" y="3" width="16" height="11" fill="#ffc107"/><rect x="2" y="3" width="12" height="1" fill="#fff3c0"/></svg></div>
<div class="tr" style="left:154px;top:1094px">边坡子分部工程检验批验收记录（<span class="a">010601</span>～<span class="a">010603</span>）</div>
<div style="left:128px;top:1128px;width:6px;height:1px;background-image:linear-gradient(90deg,#8a8a8a 50%,transparent 50%);background-size:2px 1px"></div>
<div style="left:119px;top:1124px;width:9px;height:9px"><svg width="9" height="9"><rect x="0.5" y="0.5" width="8" height="8" rx="1" fill="#f4f4f4" stroke="#8e8e8e"/><path d="M2 4.5H7" stroke="#2b4f9e" stroke-width="1.2"/><path d="M4.5 2V7" stroke="#2b4f9e" stroke-width="1.2"/></svg></div>
<div style="left:134px;top:1120px;width:16px;height:14px"><svg width="16" height="14"><path d="M0 0.5H6.5L8.5 2.5H16V14H0Z" fill="#ffa000"/><rect x="0" y="3" width="16" height="11" fill="#ffc107"/><rect x="2" y="3" width="12" height="1" fill="#fff3c0"/></svg></div>
<div class="tr" style="left:154px;top:1116px">地下防水子分部工程检验批验收记录（<span class="a">010701</span>～<span class="a">010726</span>）</div>
<div style="left:128px;top:1150px;width:6px;height:1px;background-image:linear-gradient(90deg,#8a8a8a 50%,transparent 50%);background-size:2px 1px"></div>
<div style="left:119px;top:1146px;width:9px;height:9px"><svg width="9" height="9"><rect x="0.5" y="0.5" width="8" height="8" rx="1" fill="#f4f4f4" stroke="#8e8e8e"/><path d="M2 4.5H7" stroke="#2b4f9e" stroke-width="1.2"/><path d="M4.5 2V7" stroke="#2b4f9e" stroke-width="1.2"/></svg></div>
<div style="left:134px;top:1142px;width:16px;height:14px"><svg width="16" height="14"><path d="M0 0.5H6.5L8.5 2.5H16V14H0Z" fill="#ffa000"/><rect x="0" y="3" width="16" height="11" fill="#ffc107"/><rect x="2" y="3" width="12" height="1" fill="#fff3c0"/></svg></div>
<div class="tr" style="left:154px;top:1138px">地基处理子分部工程检验批验收记录（<span class="a">010801</span>～<span class="a">010830</span>）</div>
<div style="left:707px;top:0px;width:755px;height:58px;background:#fff"></div>
<div style="left:787px;top:1px;width:1px;height:48px;background:#d8d8d8"></div>
<div style="left:871px;top:1px;width:1px;height:48px;background:#d8d8d8"></div>
<div style="left:1111px;top:1px;width:1px;height:48px;background:#d8d8d8"></div>
<div style="left:1383px;top:1px;width:1px;height:48px;background:#d8d8d8"></div>
<div style="left:716px;top:2px;width:20px;height:16px"><svg width="20" height="16"><path d="M2.2 7.3L9.6 2.1V5.9Q16.5 6.5 17.8 14.4Q14 9.5 9.6 9.8V13.6Z" stroke="#8c8c8c" stroke-width="1" fill="#fff" stroke-linejoin="round"/></svg></div>
<div style="left:754px;top:2px;width:20px;height:16px"><svg width="20" height="16"><path d="M17.8 7.3L10.4 2.1V5.9Q3.5 6.5 2.2 14.4Q6 9.5 10.4 9.8V13.6Z" stroke="#8c8c8c" stroke-width="1" fill="#fff" stroke-linejoin="round"/></svg></div>
<div style="left:717px;top:30px;width:16px;height:18px"><svg width="16" height="18"><path d="M6 0.5H10V6L14.5 11.5V17.5H1.5V11.5L6 6Z" fill="#d4d4d4" stroke="#9a9a9a"/><rect x="1.5" y="11.5" width="13" height="2" fill="#9a9a9a"/></svg></div>
<div style="left:738px;top:33px;color:#8a8a8a;font-size:12px;line-height:14px">格式刷</div>
<div style="left:802px;top:2px;color:#a0a0a0;font-size:21px;line-height:21px;font-family:Liberation Sans">Ω</div>
<div style="left:825px;top:6px;color:#8a8a8a;font-size:12px;line-height:14px">符号</div>
<div style="left:802px;top:31px;width:18px;height:16px"><svg width="18" height="16"><rect x="0.5" y="0.5" width="17" height="15" fill="#eaeaea" stroke="#cfcfcf"/><path d="M1 15L6 8L10 12L13 9L17 15Z" fill="#c6c6c6"/><circle cx="7" cy="4.5" r="1.8" fill="#c6c6c6"/></svg></div>
<div style="left:824px;top:34px;color:#8a8a8a;font-size:12px;line-height:14px">插图</div>
<div style="left:854px;top:38px;width:8px;height:5px"><svg width="8" height="5"><path d="M0 0H7L3.5 4Z" fill="#222"/></svg></div>
<div style="left:887px;top:3px;width:18px;height:18px"><svg width="18" height="18"><path d="M0.5 0.5H11.5L13.5 2.5V9M8 16.5H0.5V0.5" fill="none" stroke="#a0a0a0"/><path d="M3 4H10M3 7H8M3 10H6" stroke="#a0a0a0"/><circle cx="12.5" cy="13" r="4.3" fill="#e6e6e6" stroke="#a0a0a0"/><path d="M12.5 10.5V13H14.5" stroke="#a0a0a0" fill="none"/></svg></div>
<div style="left:908px;top:6px;color:#8a8a8a;font-size:12px;line-height:14px">原始记录</div>
<div style="left:980px;top:3px;width:18px;height:17px"><svg width="18" height="17"><path d="M0.5 0.5H11.5L13.5 2.5V6M7 16.5H0.5V0.5" fill="none" stroke="#a0a0a0"/><path d="M3 4H10M3 7H7M3 10H6" stroke="#a0a0a0"/><circle cx="11.5" cy="11.5" r="4" fill="#c8c8c8" stroke="#a0a0a0"/></svg></div>
<div style="left:1000px;top:6px;color:#8a8a8a;font-size:12px;line-height:14px">报验</div>
<div style="left:1040px;top:1px;color:#b0b0b0;font-size:21px;line-height:21px;font-family:Liberation Serif">Σ</div>
<div style="left:1060px;top:6px;color:#8a8a8a;font-size:12px;line-height:14px">计算</div>
<div style="left:1090px;top:9px;width:8px;height:5px"><svg width="8" height="5"><path d="M0 0H7L3.5 4Z" fill="#222"/></svg></div>
<div style="left:980px;top:31px;width:19px;height:18px"><svg width="19" height="18"><path d="M0.5 0.5H11.5L13.5 2.5V6M5 16.5H0.5V0.5" fill="none" stroke="#a0a0a0"/><path d="M3 4H10M3 7H7M3 10H5" stroke="#a0a0a0"/><ellipse cx="12" cy="12.5" rx="6" ry="3.5" fill="#e0e0e0" stroke="#a0a0a0"/><circle cx="12" cy="12.5" r="1.8" fill="#a0a0a0"/></svg></div>
<div style="left:1000px;top:34px;color:#8a8a8a;font-size:12px;line-height:14px">隐蔽</div>
<div style="left:1041px;top:32px;width:16px;height:16px"><svg width="16" height="16"><path d="M0.5 0V15.5H16M4.5 15V7.5H7.5V15M7.5 15V2.5H10.5V15M10.5 15V9.5H13.5V15" fill="none" stroke="#b0b0b0"/></svg></div>
<div style="left:1062px;top:34px;color:#8a8a8a;font-size:12px;line-height:14px">汇总</div>
<div style="left:1093px;top:38px;width:8px;height:5px"><svg width="8" height="5"><path d="M0 0H7L3.5 4Z" fill="#222"/></svg></div>
<div style="left:1126px;top:3px;width:112px;height:20px;background:#ececf1;border:1px solid #c5c5d8"></div>
<div style="left:1130px;top:6px;color:#8a8a8a;font-size:12px;line-height:14px">宋体</div>
<div style="left:1226px;top:11px;width:8px;height:5px"><svg width="8" height="5"><path d="M0 0H7L3.5 4Z" fill="#b8b8b8"/></svg></div>
<div style="left:1253px;top:3px;width:53px;height:20px;background:#ececf1;border:1px solid #c5c5d8"></div>
<div style="left:1257px;top:6px;color:#8a8a8a;font-size:12px;line-height:14px">10</div>
<div style="left:1294px;top:11px;width:8px;height:5px"><svg width="8" height="5"><path d="M0 0H7L3.5 4Z" fill="#b8b8b8"/></svg></div>
<div style="left:1318px;top:4px;width:50px;height:14px"><svg width="50" height="14"><path d="M2 6.5H13M7.5 1V12" stroke="#8a8a8a" stroke-width="2"/><path d="M33 6.5H44" stroke="#8a8a8a" stroke-width="2"/></svg></div>
<div style="left:1127px;top:31px;color:#8a8a8a;font-size:14px;line-height:16px;font-weight:bold">B</div>
<div style="left:1161px;top:31px;color:#8a8a8a;font-size:14px;line-height:16px;font-style:italic;font-family:Liberation Serif">I</div>
<div style="left:1194px;top:30px;color:#8a8a8a;font-size:13px;line-height:16px;text-decoration:underline">U</div>
<div style="left:1224px;top:31px;color:#8a8a8a;font-size:14px;line-height:16px;font-weight:bold">X</div>
<div style="left:1236px;top:28px;color:#8a8a8a;font-size:8px;line-height:8px">2</div>
<div style="left:1256px;top:31px;color:#8a8a8a;font-size:14px;line-height:16px;font-weight:bold">X</div>
<div style="left:1268px;top:40px;color:#8a8a8a;font-size:8px;line-height:8px">2</div>
<div style="left:1280px;top:32px;color:#8a8a8a;font-size:13px;line-height:14px;text-decoration:line-through">ab</div>
<div style="left:1305px;top:35px;width:5px;height:5px;background:#d0d0d0"></div>
<div style="left:1319px;top:31px;color:#8a8a8a;font-size:14px;line-height:14px;font-family:Liberation Serif">A</div>
<div style="left:1319px;top:46px;width:13px;height:2px;background:#8a8a8a"></div>
<div style="left:1346px;top:27px;color:#8a8a8a;font-size:12px;line-height:11px">ab</div>
<div style="left:1346px;top:38px;color:#8a8a8a;font-size:11px;line-height:11px">c↵</div>
<div style="left:1398px;top:4px;width:12px;height:1px;background:#7a7a7a"></div>
<div style="left:1400px;top:7px;width:8px;height:1px;background:#7a7a7a"></div>
<div style="left:1398px;top:10px;width:12px;height:1px;background:#7a7a7a"></div>
<div style="left:1430px;top:8px;width:12px;height:1px;background:#7a7a7a"></div>
<div style="left:1432px;top:11px;width:8px;height:1px;background:#7a7a7a"></div>
<div style="left:1430px;top:14px;width:12px;height:1px;background:#7a7a7a"></div>
<div style="left:1460px;top:12px;width:2px;height:1px;background:#7a7a7a"></div>
<div style="left:1460px;top:18px;width:2px;height:1px;background:#7a7a7a"></div>
<div style="left:1399px;top:35px;width:12px;height:1px;background:#7a7a7a"></div>
<div style="left:1399px;top:38px;width:8px;height:1px;background:#7a7a7a"></div>
<div style="left:1399px;top:41px;width:12px;height:1px;background:#7a7a7a"></div>
<div style="left:1399px;top:44px;width:8px;height:1px;background:#7a7a7a"></div>
<div style="left:1430px;top:35px;width:12px;height:1px;background:#7a7a7a"></div>
<div style="left:1432px;top:38px;width:8px;height:1px;background:#7a7a7a"></div>
<div style="left:1430px;top:41px;width:12px;height:1px;background:#7a7a7a"></div>
<div style="left:1432px;top:44px;width:8px;height:1px;background:#7a7a7a"></div>
<div style="left:1459px;top:35px;width:3px;height:1px;background:#7a7a7a"></div>
<div style="left:1459px;top:41px;width:3px;height:1px;background:#7a7a7a"></div>
<div style="left:707px;top:59px;width:755px;height:1081px;background:#efefef"></div>
<div style="left:1430px;top:59px;width:32px;height:1px;background:#8a8a8a"></div>
<div style="left:706px;top:59px;width:725px;height:20px;background:#f0f0f0;border-top:1px solid #8a8a8a;border-left:1px solid #8a8a8a"></div>
<div style="left:706px;top:78px;width:725px;height:1px;background:#9a9a9a"></div>
<div style="left:739px;top:60px;width:1px;height:18px;background:#a8a8a8"></div>
<div style="left:745px;top:60px;width:1px;height:18px;background:#a8a8a8"></div>
<div style="left:769px;top:60px;width:1px;height:18px;background:#a8a8a8"></div>
<div style="left:794px;top:60px;width:1px;height:18px;background:#a8a8a8"></div>
<div style="left:819px;top:60px;width:1px;height:18px;background:#a8a8a8"></div>
<div style="left:844px;top:60px;width:1px;height:18px;background:#a8a8a8"></div>
<div style="left:865px;top:60px;width:1px;height:18px;background:#a8a8a8"></div>
<div style="left:886px;top:60px;width:1px;height:18px;background:#a8a8a8"></div>
<div style="left:911px;top:60px;width:1px;height:18px;background:#a8a8a8"></div>
<div style="left:936px;top:60px;width:1px;height:18px;background:#a8a8a8"></div>
<div style="left:963px;top:60px;width:1px;height:18px;background:#a8a8a8"></div>
<div style="left:989px;top:60px;width:1px;height:18px;background:#a8a8a8"></div>
<div style="left:1017px;top:60px;width:1px;height:18px;background:#a8a8a8"></div>
<div style="left:1045px;top:60px;width:1px;height:18px;background:#a8a8a8"></div>
<div style="left:1073px;top:60px;width:1px;height:18px;background:#a8a8a8"></div>
<div style="left:1098px;top:60px;width:1px;height:18px;background:#a8a8a8"></div>
<div style="left:1123px;top:60px;width:1px;height:18px;background:#a8a8a8"></div>
<div style="left:1155px;top:60px;width:1px;height:18px;background:#a8a8a8"></div>
<div style="left:1185px;top:60px;width:1px;height:18px;background:#a8a8a8"></div>
<div style="left:1210px;top:60px;width:1px;height:18px;background:#a8a8a8"></div>
<div style="left:1235px;top:60px;width:1px;height:18px;background:#a8a8a8"></div>
<div style="left:1260px;top:60px;width:1px;height:18px;background:#a8a8a8"></div>
<div style="left:1285px;top:60px;width:1px;height:18px;background:#a8a8a8"></div>
<div style="left:1320px;top:60px;width:1px;height:18px;background:#a8a8a8"></div>
<div style="left:1355px;top:60px;width:1px;height:18px;background:#a8a8a8"></div>
<div style="left:1375px;top:60px;width:1px;height:18px;background:#a8a8a8"></div>
<div style="left:1380px;top:60px;width:1px;height:18px;background:#a8a8a8"></div>
<div style="left:1400px;top:60px;width:1px;height:18px;background:#a8a8a8"></div>
<div style="left:1405px;top:60px;width:1px;height:18px;background:#a8a8a8"></div>
<div style="left:1425px;top:60px;width:1px;height:18px;background:#a8a8a8"></div>
<div style="left:1430px;top:60px;width:1px;height:18px;background:#a8a8a8"></div>
<div class="ch" style="left:745px;width:24px"><span style="display:inline-block;transform:scaleX(0.8)">B</span></div>
<div class="ch" style="left:769px;width:25px"><span style="display:inline-block;transform:scaleX(0.8)">C</span></div>
<div class="ch" style="left:794px;width:25px"><span style="display:inline-block;transform:scaleX(0.8)">D</span></div>
<div class="ch" style="left:819px;width:25px"><span style="display:inline-block;transform:scaleX(0.8)">E</span></div>
<div class="ch" style="left:844px;width:21px"><span style="display:inline-block;transform:scaleX(0.8)">F</span></div>
<div class="ch" style="left:865px;width:21px"><span style="display:inline-block;transform:scaleX(0.8)">G</span></div>
<div class="ch" style="left:886px;width:25px"><span style="display:inline-block;transform:scaleX(0.8)">H</span></div>
<div class="ch" style="left:911px;width:25px"><span style="display:inline-block;transform:scaleX(0.8)">I</span></div>
<div class="ch" style="left:936px;width:27px"><span style="display:inline-block;transform:scaleX(0.8)">J</span></div>
<div class="ch" style="left:963px;width:26px"><span style="display:inline-block;transform:scaleX(0.8)">K</span></div>
<div class="ch" style="left:989px;width:28px"><span style="display:inline-block;transform:scaleX(0.8)">L</span></div>
<div class="ch" style="left:1017px;width:28px"><span style="display:inline-block;transform:scaleX(0.8)">M</span></div>
<div class="ch" style="left:1045px;width:28px"><span style="display:inline-block;transform:scaleX(0.8)">N</span></div>
<div class="ch" style="left:1073px;width:25px"><span style="display:inline-block;transform:scaleX(0.8)">O</span></div>
<div class="ch" style="left:1098px;width:25px"><span style="display:inline-block;transform:scaleX(0.8)">P</span></div>
<div class="ch" style="left:1123px;width:32px"><span style="display:inline-block;transform:scaleX(0.8)">Q</span></div>
<div class="ch" style="left:1155px;width:30px"><span style="display:inline-block;transform:scaleX(0.8)">R</span></div>
<div class="ch" style="left:1185px;width:25px"><span style="display:inline-block;transform:scaleX(0.8)">S</span></div>
<div class="ch" style="left:1210px;width:25px"><span style="display:inline-block;transform:scaleX(0.8)">T</span></div>
<div class="ch" style="left:1235px;width:25px"><span style="display:inline-block;transform:scaleX(0.8)">U</span></div>
<div class="ch" style="left:1260px;width:25px"><span style="display:inline-block;transform:scaleX(0.8)">V</span></div>
<div class="ch" style="left:1285px;width:35px"><span style="display:inline-block;transform:scaleX(0.8)">W</span></div>
<div class="ch" style="left:1320px;width:35px"><span style="display:inline-block;transform:scaleX(0.8)">X</span></div>
<div class="ch" style="left:1355px;width:20px"><span style="display:inline-block;transform:scaleX(0.8)">Y</span></div>
<div class="ch" style="left:1380px;width:20px"><span style="display:inline-block;transform:scaleX(0.8)">AA</span></div>
<div class="ch" style="left:1405px;width:20px"><span style="display:inline-block;transform:scaleX(0.8)">AC</span></div>
<div style="left:726px;top:66px;width:13px;height:12px"><svg width="13" height="12"><path d="M1 12L12 1M5 12L12 5M9 12L12 9" stroke="#a8a8a8" stroke-width="1"/></svg></div>
<div style="left:706px;top:79px;width:1px;height:1061px;background:#8a8a8a"></div>
<div style="left:707px;top:79px;width:32px;height:1022px;background:#f0f0f0"></div>
<div style="left:707px;top:83px;width:32px;height:1px;background:#a8a8a8"></div>
<div style="left:707px;top:143px;width:32px;height:1px;background:#a8a8a8"></div>
<div style="left:707px;top:163px;width:32px;height:1px;background:#a8a8a8"></div>
<div style="left:707px;top:168px;width:32px;height:1px;background:#a8a8a8"></div>
<div style="left:707px;top:218px;width:32px;height:1px;background:#a8a8a8"></div>
<div style="left:707px;top:268px;width:32px;height:1px;background:#a8a8a8"></div>
<div style="left:707px;top:318px;width:32px;height:1px;background:#a8a8a8"></div>
<div style="left:707px;top:363px;width:32px;height:1px;background:#a8a8a8"></div>
<div style="left:707px;top:433px;width:32px;height:1px;background:#a8a8a8"></div>
<div style="left:707px;top:503px;width:32px;height:1px;background:#a8a8a8"></div>
<div style="left:707px;top:573px;width:32px;height:1px;background:#a8a8a8"></div>
<div style="left:707px;top:643px;width:32px;height:1px;background:#a8a8a8"></div>
<div style="left:707px;top:716px;width:32px;height:1px;background:#a8a8a8"></div>
<div style="left:707px;top:789px;width:32px;height:1px;background:#a8a8a8"></div>
<div style="left:707px;top:862px;width:32px;height:1px;background:#a8a8a8"></div>
<div style="left:707px;top:963px;width:32px;height:1px;background:#a8a8a8"></div>
<div style="left:707px;top:1096px;width:32px;height:1px;background:#a8a8a8"></div>
<div style="left:707px;top:1101px;width:32px;height:1px;background:#a8a8a8"></div>
<div class="rh" style="left:707px;top:107px">2</div>
<div class="rh" style="left:707px;top:147px">3</div>
<div class="rh" style="left:707px;top:187px">5</div>
<div class="rh" style="left:707px;top:237px">6</div>
<div class="rh" style="left:707px;top:287px">7</div>
<div class="rh" style="left:707px;top:334px">8</div>
<div class="rh" style="left:707px;top:392px">9</div>
<div class="rh" style="left:707px;top:462px">10</div>
<div class="rh" style="left:707px;top:532px">11</div>
<div class="rh" style="left:707px;top:602px">12</div>
<div class="rh" style="left:707px;top:673px">13</div>
<div class="rh" style="left:707px;top:746px">14</div>
<div class="rh" style="left:707px;top:819px">15</div>
<div class="rh" style="left:707px;top:906px">16</div>
<div class="rh" style="left:707px;top:1023px">17</div>
<div style="left:721px;top:80px;width:2px;height:2px;background:#111"></div>
<div style="left:720px;top:165px;width:4px;height:1px;background:#333"></div>
<div style="left:718px;top:1098px;width:2px;height:2px;background:#222"></div>
<div style="left:723px;top:1098px;width:5px;height:1px;background:#333"></div>
<div style="left:739px;top:78px;width:2px;height:1024px;background:#111"></div>
<div style="left:741px;top:79px;width:4px;height:1022px;background:#fff"></div>
<div style="left:743px;top:78px;width:3px;height:90px;background:#111"></div>
<div style="left:742px;top:1099px;width:5px;height:5px;background:#111"></div>
<div style="left:746px;top:79px;width:684px;height:1022px;background:#dedede"></div>
<div style="left:845px;top:168px;width:253px;height:100px;background:#f1c9a6"></div>
<div style="left:1186px;top:168px;width:239px;height:100px;background:#f1c9a6"></div>
<div style="left:845px;top:269px;width:340px;height:49px;background:#f1c9a6"></div>
<div style="left:1286px;top:269px;width:139px;height:49px;background:#fff"></div>
<div style="left:1186px;top:364px;width:239px;height:732px;background:#f1c9a6"></div>
<div style="left:1178px;top:269px;width:6px;height:6px"><svg width="6" height="6"><path d="M0 0H6V6Z" fill="#e00"/></svg></div>
<div style="left:745px;top:167px;width:681px;height:2px;background:#000"></div>
<div style="left:745px;top:218px;width:680px;height:1px;background:#000"></div>
<div style="left:745px;top:268px;width:680px;height:1px;background:#000"></div>
<div style="left:745px;top:318px;width:680px;height:1px;background:#000"></div>
<div style="left:745px;top:363px;width:680px;height:1px;background:#000"></div>
<div style="left:769px;top:433px;width:656px;height:1px;background:#000"></div>
<div style="left:769px;top:503px;width:656px;height:1px;background:#000"></div>
<div style="left:769px;top:573px;width:656px;height:1px;background:#000"></div>
<div style="left:769px;top:643px;width:656px;height:1px;background:#000"></div>
<div style="left:745px;top:716px;width:680px;height:1px;background:#000"></div>
<div style="left:769px;top:789px;width:656px;height:1px;background:#000"></div>
<div style="left:769px;top:862px;width:656px;height:1px;background:#000"></div>
<div style="left:794px;top:963px;width:631px;height:1px;background:#000"></div>
<div style="left:745px;top:1095px;width:681px;height:2px;background:#000"></div>
<div style="left:745px;top:167px;width:1px;height:930px;background:#000"></div>
<div style="left:844px;top:167px;width:1px;height:151px;background:#000"></div>
<div style="left:1098px;top:167px;width:1px;height:101px;background:#000"></div>
<div style="left:1185px;top:167px;width:1px;height:929px;background:#000"></div>
<div style="left:1285px;top:268px;width:1px;height:50px;background:#000"></div>
<div style="left:769px;top:363px;width:1px;height:733px;background:#000"></div>
<div style="left:794px;top:363px;width:1px;height:733px;background:#000"></div>
<div style="left:1424px;top:167px;width:2px;height:930px;background:#000"></div>
<div style="left:745px;top:102px;width:681px;text-align:center;font-size:22px;line-height:22px">表<span class="t">C.2.1-10 </span>钢筋安装工程检验批质量验收记录</div>
<style>.t{font-family:"Liberation Mono",monospace;font-size:19px;letter-spacing:-0.4px;display:inline-block;transform:scaleY(1.28);transform-origin:50% 80%}</style>
<div style="left:1311px;top:147px;font-family:Liberation Sans;font-size:12.5px;line-height:13px;letter-spacing:0.1px">010205</div>
<div style="left:1355px;top:143px;width:21px;height:21px;background:#fff;border:1px solid #000"></div>
<div style="left:1380px;top:143px;width:21px;height:21px;background:#fff;border:1px solid #000"></div>
<div style="left:1405px;top:143px;width:21px;height:21px;background:#fff;border:1px solid #000"></div>
<div class="sh" style="left:745px;top:182.1px;width:100px;text-align:center">单位<span class="a">(</span>子单位<span class="a">)</span><br>工程</div>
<div class="sh" style="left:745px;top:238.6px;width:100px;text-align:center">施工单位</div>
<div class="sh" style="left:745px;top:288.6px;width:100px;text-align:center">施工依据</div>
<div class="sh" style="left:1098px;top:182.1px;width:88px;text-align:center">分部<span class="a">(</span>子分部<span class="a">)</span><br>及部位</div>
<div class="sh" style="left:1098px;top:238.6px;width:88px;text-align:center">项目负责人</div>
<div class="sh" style="left:845px;top:288.6px;width:340px;text-align:center">《混凝土结构工程施工规范》<span class="a">GB 50666-2011</span></div>
<div class="sh" style="left:1185px;top:288.6px;width:101px;text-align:center">检验批容量</div>
<div class="sh" style="left:745px;top:336.1px;width:440px;text-align:center">施工质量验收规程的规定</div>
<div class="sh" style="left:1185px;top:336.1px;width:240px;text-align:center">施工单位检查记录</div>
<div class="sh" style="left:745px;top:515.7px;width:25px;text-align:center">主<br>控<br>项<br>目</div>
<div class="sh" style="left:745px;top:882.2px;width:25px;text-align:center">一<br>般<br>项<br>目</div>
<div class="sh" style="left:769px;top:392.2px;width:26px;text-align:center;font-family:Liberation Serif;font-size:12.5px;letter-spacing:0">1</div>
<div class="sh" style="left:769px;top:462.2px;width:26px;text-align:center;font-family:Liberation Serif;font-size:12.5px;letter-spacing:0">2</div>
<div class="sh" style="left:769px;top:532.2px;width:26px;text-align:center;font-family:Liberation Serif;font-size:12.5px;letter-spacing:0">3</div>
<div class="sh" style="left:769px;top:602.2px;width:26px;text-align:center;font-family:Liberation Serif;font-size:12.5px;letter-spacing:0">4</div>
<div class="sh" style="left:769px;top:673.7px;width:26px;text-align:center;font-family:Liberation Serif;font-size:12.5px;letter-spacing:0">5</div>
<div class="sh" style="left:769px;top:746.7px;width:26px;text-align:center;font-family:Liberation Serif;font-size:12.5px;letter-spacing:0">1</div>
<div class="sh" style="left:769px;top:819.7px;width:26px;text-align:center;font-family:Liberation Serif;font-size:12.5px;letter-spacing:0">2</div>
<div class="sh" style="left:769px;top:973.2px;width:26px;text-align:center;font-family:Liberation Serif;font-size:12.5px;letter-spacing:0">3</div>
<div class="sh" style="left:798px;top:393.6px">钢筋安装时，受力钢筋的牌号、规格和数量必须符合设计要求</div>
<div class="sh" style="left:798px;top:463.6px">钢筋应安装牢固，受力钢筋的安装位置、锚固方式应符合设计要求</div>
<div class="sh" style="left:798px;top:533.5px">钢筋的连接方式应符合设计要求</div>
<div class="sh" style="left:798px;top:597.1px">钢筋机械连接或焊接连接接头试件应从完成的实体中截取，并应按<br>规定进行检验</div>
<div class="sh" style="left:798px;top:662.1px">钢筋采用机械连接时，螺纹接头应检验拧紧扭矩，挤压接头应量测<br>压痕直径，检验结果应符合现行行业标准《钢筋机械连接技术规程<br>》<span class="a">JGJ 107</span>的相关规定</div>
<div class="sh" style="left:798px;top:735.1px">钢筋接头的位置应符合设计和施工方案要求。有抗震设防要求的结<br>构中，梁端、柱端箍筋加密区范围内不应进行钢筋搭接。接头末端<br>至钢筋弯起点的距离不应小于钢筋直径的<span class="a">10</span>倍</div>
<div class="sh" style="left:798px;top:808.1px">钢筋机械连接接头、焊接接头的外观质量应符合现行行业标准《钢<br>筋机械连接技术规程》<span class="a">JGJ 107</span>、《钢筋焊接及验收规程》<span class="a">JGJ 18</span><br>的规定</div>
<div class="sh" style="left:798px;top:882.2px">当纵向受力钢筋采用机械连接接头或焊接接头时，同一连接区段内<br>纵向受力钢筋的接头面积百分率应符合设计要求；当设计无具体要<br>求时，应符合下列规定：<span class="a">1</span>）受拉接头，不宜大于<span class="a">50%</span>；受压接头，<br>可不受限制；<span class="a">2</span>）直接承受动力荷载的结构构件中，不宜采用焊接；<br>当采用机械连接时，不应超过<span class="a">50%</span></div>
<div class="sh" style="left:798px;top:986.4px">当纵向受力钢筋采用绑扎搭接接头时，接头的设置应符合下列规定<br>：<span class="a">1</span>）接头的横向净间距不应小于钢筋直径，且不应小于<span class="a">25mm</span>；<span class="a">2</span>）<br>同一连接区段内，纵向受拉钢筋的接头面积百分率应符合设计要求<br>；当设计无具体要求时，应符合下列规定：<span class="a">1</span>）梁类、板类及墙类构<br>件，不宜超过<span class="a">25%</span>；基础筏板，不宜超过<span class="a">50%</span>。<span class="a">2</span>）柱类构件，不宜<br>超过<span class="a">50%</span>。<span class="a">3</span>）当工程中确有必要增大接头面积百分率时，对梁类构<br>件，不应大于<span class="a">50%</span></div>
<div style="left:771px;top:513px;width:423px;height:576px;border:5px solid #e8402a;border-radius:5px"></div>
</body></html>
